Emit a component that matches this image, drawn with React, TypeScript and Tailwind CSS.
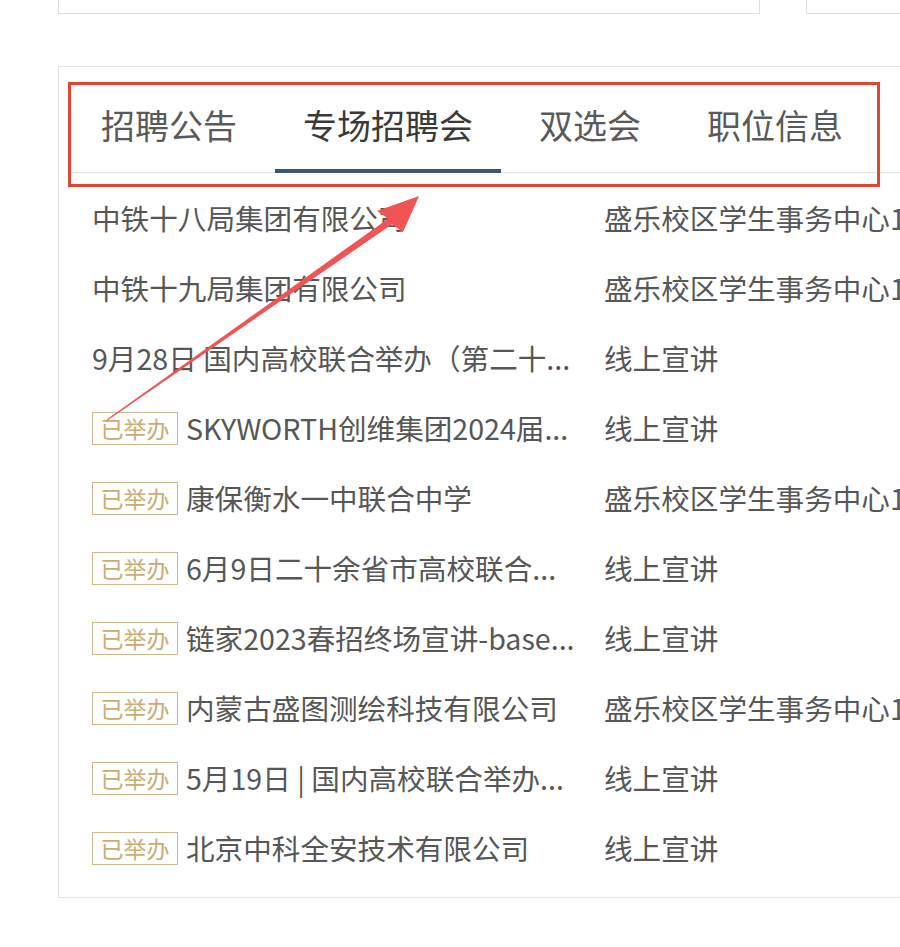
import React from "react";

type Row = { badge?: boolean; title: string; place: string };

const rows: Row[] = [
  { title: "中铁十八局集团有限公司", place: "盛乐校区学生事务中心1楼" },
  { title: "中铁十九局集团有限公司", place: "盛乐校区学生事务中心1楼" },
  { title: "9月28日 国内高校联合举办（第二十...", place: "线上宣讲" },
  { badge: true, title: "SKYWORTH创维集团2024届...", place: "线上宣讲" },
  { badge: true, title: "康保衡水一中联合中学", place: "盛乐校区学生事务中心1楼" },
  { badge: true, title: "6月9日二十余省市高校联合...", place: "线上宣讲" },
  { badge: true, title: "链家2023春招终场宣讲-base...", place: "线上宣讲" },
  { badge: true, title: "内蒙古盛图测绘科技有限公司", place: "盛乐校区学生事务中心1楼" },
  { badge: true, title: "5月19日 | 国内高校联合举办...", place: "线上宣讲" },
  { badge: true, title: "北京中科全安技术有限公司", place: "线上宣讲" },
];

const tabs = ["招聘公告", "专场招聘会", "双选会", "职位信息"];

export default function App() {
  return (
    <div
      className="relative w-[900px] h-[947px] overflow-hidden bg-white"
      style={{ fontFamily: '"Microsoft YaHei", "Noto Sans CJK SC", "Noto Sans", sans-serif' }}
    >
      {/* top cards (bottom edges) */}
      <div className="flex h-[14px]">
        <div className="ml-[58px] w-[702px] border-x border-b border-[#dedede]" />
        <div className="ml-[46px] flex-1 border-l border-b border-[#dedede]" />
      </div>

      {/* main card */}
      <div className="mt-[52px] ml-[58px] w-[900px] border border-[#e2e2e2] bg-white pb-[14px]">
        <div className="ml-[14px] flex gap-[10px] border-b border-[#e3e3e3]">
          {tabs.map((t, i) => (
            <div
              key={t}
              className={
                "px-[28px] pt-[41px] pb-[26px] text-[34px] leading-[34px] whitespace-nowrap " +
                (i === 1
                  ? "mb-[-1px] border-b-[4px] border-[#3e5670] text-[#3a3a3a]"
                  : "border-b-[4px] border-transparent text-[#5a5a5a]")
              }
            >
              {t}
            </div>
          ))}
        </div>

        <div className="pt-[10px]">
          {rows.map((r, i) => (
            <div key={i} className="flex h-[70px] items-center pl-[33px] text-[28.6px] text-[#575757]">
              <div className="flex w-[490px] min-w-0 items-center gap-[8px]">
                {r.badge && (
                  <span className="flex h-[33px] w-[86px] shrink-0 items-center justify-center border-[1.5px] border-[#cdb98c] text-[23px] leading-none text-[#c9ad74]">
                    已举办
                  </span>
                )}
                <span className="truncate whitespace-nowrap leading-[40px]">{r.title}</span>
              </div>
              <div className="ml-[22px] whitespace-nowrap leading-[40px]">{r.place}</div>
            </div>
          ))}
        </div>
      </div>

      {/* annotation: red box */}
      <div className="pointer-events-none absolute left-[68px] top-[82px] h-[105px] w-[812px] border-[3px] border-[#e0452f]" />

      {/* annotation: arrow */}
      <svg
        className="pointer-events-none absolute left-0 top-0"
        width="900"
        height="947"
        viewBox="0 0 900 947"
      >
        <polygon
          points="106.7,419.6 388,218.7 377,211 419,196 403,232 392,224.3 107.3,420.4"
          fill="#f25353"
        />
      </svg>
    </div>
  );
}
